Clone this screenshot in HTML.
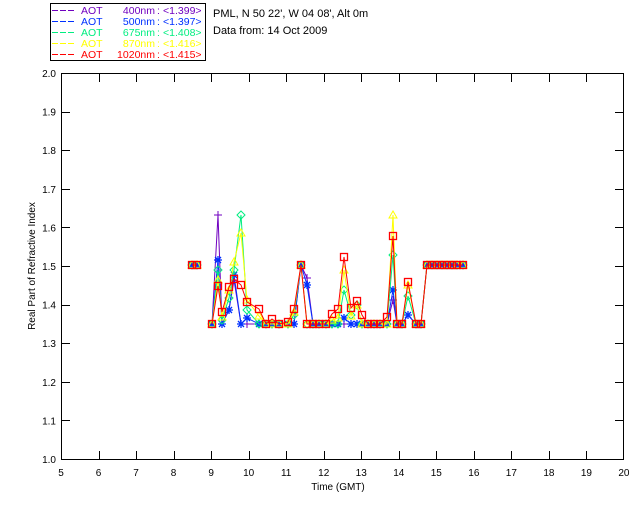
<!DOCTYPE html>
<html><head><meta charset="utf-8"><style>
html,body{margin:0;padding:0;background:#fff;}
svg{display:block;font-family:"Liberation Sans",sans-serif;}
</style></head><body>
<svg id="s" width="640" height="512" xmlns="http://www.w3.org/2000/svg">
<rect width="640" height="512" fill="#fff"/>
<rect x="50.5" y="3.5" width="155" height="57" fill="#fff" stroke="#000"/>
<g id="leg" font-size="10.5"></g>
<g font-size="11">
<text x="213" y="17" fill="#000">PML, N 50 22', W 04 08', Alt 0m</text>
<text x="213" y="34" fill="#000">Data from: 14 Oct 2009</text>
</g>
<rect x="61.5" y="73.5" width="562" height="386" fill="none" stroke="#000"/>
<g id="ax" stroke="#000" fill="none"></g>
<g id="lab" font-size="10" fill="#000"></g>
<text x="338" y="490" font-size="10" text-anchor="middle">Time (GMT)</text>
<text transform="translate(35,266) rotate(-90)" font-size="10" text-anchor="middle">Real Part of Refractive Index</text>
<g id="data"></g>
</svg>
<script>
var NS="http://www.w3.org/2000/svg";
function el(p,t,a,txt){var e=document.createElementNS(NS,t);for(var k in a)e.setAttribute(k,a[k]);if(txt)e.textContent=txt;document.getElementById(p).appendChild(e);return e;}
var L=[["400nm","<1.399>","#7000c0"],["500nm","<1.397>","#0030ff"],["675nm","<1.408>","#00ee80"],["870nm","<1.416>","#ffff00"],["1020nm","<1.415>","#ff0000"]];
L.forEach(function(r,i){var y=10+i*11;
 for(var d=0;d<3;d++)el("leg","rect",{x:52+d*8,y:y,width:6,height:1,fill:r[2]});
 el("leg","text",{x:81,y:y+4,fill:r[2]},"AOT");
 el("leg","text",{x:155,y:y+4,fill:r[2],"text-anchor":"end"},r[0]);
 el("leg","text",{x:157,y:y+4,fill:r[2]},":");
 el("leg","text",{x:163,y:y+4,fill:r[2]},r[1]);});
for(var i=0;i<=15;i++){var x=61+i*37.53;var xx=Math.round(x)+.5;
 if(i>0&&i<15){el("ax","line",{x1:xx,y1:459,x2:xx,y2:451});el("ax","line",{x1:xx,y1:74,x2:xx,y2:82});}
 el("lab","text",{x:x,y:476,"text-anchor":"middle"},String(5+i));}
for(var j=0;j<=10;j++){var y=459-j*38.6;var yy=Math.round(y)+.5;
 if(j>0&&j<10){el("ax","line",{x1:62,y1:yy,x2:70,y2:yy});el("ax","line",{x1:623,y1:yy,x2:615,y2:yy});}
 el("lab","text",{x:56,y:y+4,"text-anchor":"end"},(1+j/10).toFixed(1));}
var xs=[192,197,212,218,222,229,234,241,247,259,266,272,279,288,294,301,307,313,319,326,332,338,344,351,357,362,368,374,380,387,393,397,402,408,416,421,427,432,437,442,447,452,457,463];
var T=[265,265,265,265,265,265,265,265];
var S={
p:[265,265,324,215,324,310,280,324,324,324,324,324,324,324,324,265,278,324,324,324,324,324,324,324,324,324,324,324,324,324,300,324,324,315,324,324].concat(T),
b:[265,265,324,260,324,310,275,324,318,324,324,324,324,324,324,265,285,324,324,324,324,324,318,324,324,324,324,324,324,324,290,324,324,315,324,324].concat(T),
g:[265,265,324,270,320,298,270,215,310,324,324,324,324,324,315,265,324,324,324,324,324,324,290,315,305,324,324,324,324,324,255,324,324,296,324,324].concat(T),
y:[265,265,324,280,317,290,262,233,300,316,324,324,324,324,312,265,324,324,324,324,320,318,270,316,305,324,324,324,324,324,215,324,324,285,324,324].concat(T),
r:[265,265,324,286,312,287,279,285,302,309,324,319,324,322,309,265,324,324,324,324,314,309,257,308,301,315,324,324,324,317,236,324,324,282,324,324].concat(T)};
var C={p:"#7000c0",b:"#0030ff",g:"#00ee80",y:"#ffff00",r:"#ff0000"};
["p","b","g","y","r"].forEach(function(k){var v=S[k],c=C[k];
 var a=xs.slice(0,2).map(function(x,i){return x+","+v[i]}).join(" ");
 var b=xs.slice(2).map(function(x,i){return x+","+v[i+2]}).join(" ");
 el("data","polyline",{points:a,fill:"none",stroke:c});
 el("data","polyline",{points:b,fill:"none",stroke:c});
 xs.forEach(function(x,i){var y=v[i];
  if(k=="p"){el("data","path",{d:"M"+(x-4)+" "+y+"h8M"+x+" "+(y-4)+"v8",stroke:c,fill:"none"});}
  else if(k=="b"){el("data","path",{d:"M"+(x-4)+" "+y+"h8M"+x+" "+(y-4)+"v8M"+(x-3)+" "+(y-3)+"l6 6M"+(x+3)+" "+(y-3)+"l-6 6",stroke:c,fill:"none","stroke-width":1.3});}
  else if(k=="g"){el("data","path",{d:"M"+x+" "+(y-4)+"l4 4l-4 4l-4 -4z",stroke:c,fill:"none"});}
  else if(k=="y"){el("data","path",{d:"M"+x+" "+(y-4)+"l4 7h-8z",stroke:c,fill:"none"});}
  else {el("data","rect",{x:x-3.5,y:y-3.5,width:7,height:7,stroke:c,fill:"none","stroke-width":1.3});}
 });});
</script>
</body></html>
